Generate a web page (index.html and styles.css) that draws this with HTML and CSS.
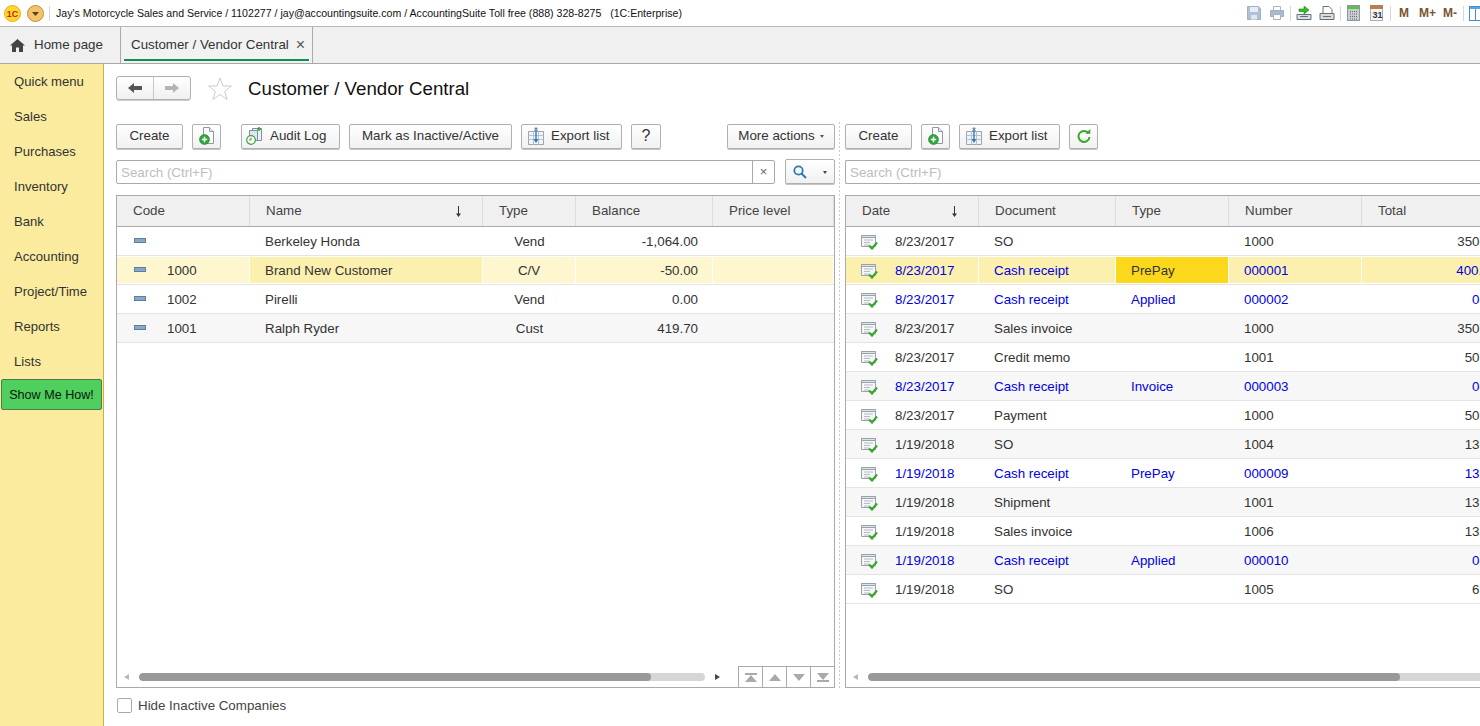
FILE: index.html
```html
<!DOCTYPE html>
<html lang="en">
<head>
<meta charset="utf-8">
<title>Customer / Vendor Central</title>
<link rel="stylesheet" href="styles.css">
</head>
<body>
<svg class="defs" width="0" height="0" aria-hidden="true">
  <symbol id="add" viewBox="0 0 16 18">
    <path d="M4.500 .5h6l4 4v12h-10z" fill="#fff" stroke="#8c98a4"/>
    <path d="M10.500 .5v4h4" fill="#e4e9ee" stroke="#8c98a4"/>
    <circle cx="5.500" cy="12.500" r="5" fill="#2ea63a" stroke="#1d8a2a" stroke-width=".6"/>
    <path d="M2.800 12.500h5.400M5.500 9.800v5.400" stroke="#fff" stroke-width="1.500"/>
  </symbol>
  <symbol id="export" viewBox="0 0 18 18">
    <path d="M1.500 4.500h15v13h-15z" fill="#f2f5f8" stroke="#9aa6b2"/>
    <path d="M6.500 4.500v13M11.500 4.500v13M1.500 8.500h15M1.500 12.500h15" stroke="#b8c2cc" fill="none"/>
    <path d="M9 .5v14" stroke="#2f78c0" stroke-width="1.400"/>
    <path d="M6.500 12l2.500 4 2.500-4z" fill="#2f78c0"/>
    <path d="M7 1l4 3M11 1L7 4" stroke="#77838f" stroke-width=".7"/>
  </symbol>
  <symbol id="doc" viewBox="0 0 17 16">
    <path d="M.5 1.500h14v11H.500z" fill="#f6f7f8" stroke="#98a2ac"/>
    <path d="M.5 1.500h14v2H.500z" fill="#dfe3e7" stroke="#98a2ac"/>
    <path d="M3 6h9M3 8.500h6M3 11h5" stroke="#b3bbc3"/>
    <path d="M8 11.500l3 3 5-6" fill="none" stroke="#3aa62e" stroke-width="2.200"/>
  </symbol>
  <symbol id="dash" viewBox="0 0 12 5">
    <rect x=".5" y=".5" width="11" height="4" fill="#86a9c6" stroke="#5d7f9c"/>
  </symbol>
  <symbol id="sortdown" viewBox="0 0 7 11">
    <path d="M3.500 0v10" stroke="#333" stroke-width="1"/>
    <path d="M1 7.500h5L3.500 11z" fill="#333"/>
  </symbol>
</svg>

<header class="topbar">
  <svg class="logo" width="17" height="17" viewBox="0 0 17 17"><circle cx="8.500" cy="8.500" r="8" fill="#fbd92e" stroke="#f0a81c"/><text x="2.800" y="11.500" class="logo-text">1C</text></svg>
  <svg class="menu-dot" width="17" height="17" viewBox="0 0 17 17"><circle cx="8.500" cy="8.500" r="8" fill="#f6c468" stroke="#bf8a3a"/><path d="M5 7h7l-3.500 4z" fill="#5b4020"/></svg>
  <span class="top-sep first"></span>
  <span class="top-title">Jay's Motorcycle Sales and Service / 1102277 / jay@accountingsuite.com / AccountingSuite Toll free (888) 328-8275 &nbsp; (1C:Enterprise)</span>
  <div class="top-tools">
    <svg width="14" height="14" viewBox="0 0 14 14"><path d="M.5.5h11l2 2v11H.500z" fill="#aec0d4" stroke="#9db0c4"/><path d="M3 1h8v5H3z" fill="#e6edf4"/><path d="M4 9h6v4.500H4z" fill="#dfe6ee"/></svg>
    <svg width="14" height="14" viewBox="0 0 14 14"><path d="M3.500.5h7v4h-7z" fill="#fff" stroke="#a8b4c0"/><path d="M.5 4.500h13v6h-13z" fill="#a9bacb" stroke="#9fb0c0"/><path d="M3.500 8.500h7v5h-7z" fill="#fff" stroke="#a8b4c0"/></svg>
    <span class="top-sep"></span>
    <svg width="16" height="15" viewBox="0 0 16 15"><path d="M1 8.500h14v5H1z" fill="#d8dde2" stroke="#667078"/><path d="M4 10.500h8" stroke="#667078"/><path d="M3 3h5V0l5 4-5 4V5.500H3z" fill="#2fc11f" stroke="#1d7d14" stroke-width=".6"/></svg>
    <svg width="16" height="15" viewBox="0 0 16 15"><path d="M4 .5h6l3 3v5H4z" fill="#fff" stroke="#667078"/><path d="M1 7.500h14v6H1z" fill="#d8dde2" stroke="#667078"/><path d="M4 10.500h8" stroke="#667078"/></svg>
    <span class="top-sep"></span>
    <svg width="13" height="16" viewBox="0 0 13 16"><rect x=".5" y=".5" width="12" height="15" fill="#c9ced3" stroke="#8f979e"/><rect x="1" y="1" width="11" height="3" fill="#5cc04e"/><path d="M3 6.500h7M3 9h7M3 11.500h7M3 14h7" stroke="#666" stroke-dasharray="1 1"/></svg>
    <svg width="13" height="16" viewBox="0 0 13 16"><rect x=".5" y=".5" width="12" height="15" fill="#f2f4f6" stroke="#a8aeb4"/><rect x="0" y="0" width="13" height="4" fill="#b97e4c"/><text x="2.500" y="13" class="cal-text">31</text></svg>
    <span class="top-sep"></span>
    <span class="mem">M</span><span class="mem">M+</span><span class="mem">M-</span>
    <span class="top-sep"></span>
    <svg class="panel-icon" width="16" height="15" viewBox="0 0 16 15"><rect x=".5" y=".5" width="15" height="14" fill="#fff" stroke="#3e8fd0"/><rect x="1" y="1" width="14" height="2" fill="#58a6e0"/><path d="M6.500 3v11" stroke="#3e8fd0"/></svg>
  </div>
</header>

<nav class="tabbar">
  <div class="tab home">
    <svg width="15" height="13" viewBox="0 0 15 13"><path d="M7.500 0L15 6.500h-2V13H9V8.500H6V13H2V6.500H0z" fill="#444"/></svg>
    <span>Home page</span>
  </div>
  <div class="tab active"><span>Customer / Vendor Central</span><span class="tab-close">&times;</span></div>
</nav>

<div class="workspace">
  <aside class="sidebar">
    <a class="side-item">Quick menu</a>
    <a class="side-item">Sales</a>
    <a class="side-item">Purchases</a>
    <a class="side-item">Inventory</a>
    <a class="side-item">Bank</a>
    <a class="side-item">Accounting</a>
    <a class="side-item">Project/Time</a>
    <a class="side-item">Reports</a>
    <a class="side-item">Lists</a>
    <button class="show-me">Show Me How!</button>
  </aside>

  <main class="content">
    <div class="title-row">
      <div class="history">
        <span class="hist-btn"><svg width="14" height="10" viewBox="0 0 14 10"><path d="M0 5l6-5v3h8v4H6v3z" fill="#555"/></svg></span>
        <span class="hist-btn"><svg width="14" height="10" viewBox="0 0 14 10"><path d="M14 5L8 0v3H0v4h8v3z" fill="#b4b4b4"/></svg></span>
      </div>
      <svg class="star" width="24" height="23" viewBox="0 0 24 23"><path d="M12 1l3 8h8.500l-7 5.500 2.700 8L12 17.500 4.800 22.500l2.700-8-7-5.500H9z" fill="#fff" stroke="#c9ced3"/></svg>
      <h1 class="page-title">Customer / Vendor Central</h1>
    </div>

    <div class="panes">
      <section class="pane left">
        <div class="toolbar">
          <button class="btn w-create">Create</button>
          <button class="btn icon-btn"><svg width="16" height="18"><use href="#add"/></svg></button>
          <button class="btn w-audit gap-l">
            <svg width="18" height="18" viewBox="0 0 18 18"><path d="M6.500 1.500h9v12h-9z" fill="#eef2f6" stroke="#7f8f9f"/><path d="M3.500 3.500h8v10h-8z" fill="#dbe6f0" stroke="#7f8f9f"/><path d="M13 0v4M11 2h4" stroke="#2ea63a" stroke-width="1.500"/><circle cx="5" cy="13" r="4.300" fill="#fff" stroke="#2ea63a" stroke-width="1.200"/><path d="M5 10.500V13h-2" stroke="#c05030" fill="none"/></svg>
            <span>Audit Log</span>
          </button>
          <button class="btn w-mark">Mark as Inactive/Active</button>
          <button class="btn w-export"><svg width="18" height="18"><use href="#export"/></svg><span>Export list</span></button>
          <button class="btn w-help">?</button>
          <button class="btn w-more">More actions <i class="caret"></i></button>
        </div>
        <div class="search-row">
          <div class="search"><span class="placeholder">Search (Ctrl+F)</span><span class="clear">&times;</span></div>
          <button class="btn search-btn">
            <svg width="14" height="14" viewBox="0 0 14 14"><circle cx="5.500" cy="5.500" r="4.200" fill="none" stroke="#2e78b4" stroke-width="1.800"/><path d="M8.500 8.500l4.500 4.500" stroke="#2e78b4" stroke-width="2"/></svg>
            <i class="caret dark"></i>
          </button>
        </div>
        <div class="grid">
          <div class="row head cols-l">
            <div class="hc">Code</div>
            <div class="hc sorted">Name<svg class="sort" width="7" height="11"><use href="#sortdown"/></svg></div>
            <div class="hc">Type</div>
            <div class="hc">Balance</div>
            <div class="hc">Price level</div>
          </div>
          <div class="rows">
            <div class="row cols-l">
              <div class="c c-code"><svg class="dash" width="12" height="5"><use href="#dash"/></svg></div><div class="c c-name">Berkeley Honda</div><div class="c c-center">Vend</div><div class="c c-bal">-1,064.00</div><div class="c"></div>
            </div>
            <div class="row cols-l sel">
              <div class="c c-code"><svg class="dash" width="12" height="5"><use href="#dash"/></svg><span>1000</span></div><div class="c c-name cur">Brand New Customer</div><div class="c c-center">C/V</div><div class="c c-bal">-50.00</div><div class="c"></div>
            </div>
            <div class="row cols-l">
              <div class="c c-code"><svg class="dash" width="12" height="5"><use href="#dash"/></svg><span>1002</span></div><div class="c c-name">Pirelli</div><div class="c c-center">Vend</div><div class="c c-bal">0.00</div><div class="c"></div>
            </div>
            <div class="row cols-l alt">
              <div class="c c-code"><svg class="dash" width="12" height="5"><use href="#dash"/></svg><span>1001</span></div><div class="c c-name">Ralph Ryder</div><div class="c c-center">Cust</div><div class="c c-bal">419.70</div><div class="c"></div>
            </div>
          </div>
          <div class="hscroll">
            <i class="arrow-l"></i>
            <div class="track l-track"><div class="thumb l-thumb"></div></div>
            <i class="arrow-r"></i>
            <div class="pager">
              <span class="pg"><svg width="12" height="9" viewBox="0 0 12 9"><path d="M0 0h12v2H0zM6 2l6 7H0z" fill="#aaa"/></svg></span>
              <span class="pg"><svg width="12" height="7" viewBox="0 0 12 7"><path d="M6 0l6 7H0z" fill="#aaa"/></svg></span>
              <span class="pg"><svg width="12" height="7" viewBox="0 0 12 7"><path d="M0 0h12L6 7z" fill="#aaa"/></svg></span>
              <span class="pg"><svg width="12" height="9" viewBox="0 0 12 9"><path d="M0 0h12L6 7zM0 7h12v2H0z" fill="#aaa"/></svg></span>
            </div>
          </div>
        </div>
      </section>

      <div class="splitter"></div>

      <section class="pane right">
        <div class="toolbar">
          <button class="btn w-create">Create</button>
          <button class="btn icon-btn"><svg width="16" height="18"><use href="#add"/></svg></button>
          <button class="btn w-export"><svg width="18" height="18"><use href="#export"/></svg><span>Export list</span></button>
          <button class="btn icon-btn"><svg width="14" height="14" viewBox="0 0 14 14"><path d="M11.500 4.200A5.500 5.500 0 1 0 12.500 8" fill="none" stroke="#3aa62e" stroke-width="2"/><path d="M8.500 4.800h4.800V0z" fill="#3aa62e"/></svg></button>
        </div>
        <div class="search-row">
          <div class="search wide"><span class="placeholder">Search (Ctrl+F)</span></div>
        </div>
        <div class="grid wide-grid">
          <div class="row head cols-r">
            <div class="hc sorted">Date<svg class="sort" width="7" height="11"><use href="#sortdown"/></svg></div>
            <div class="hc">Document</div>
            <div class="hc">Type</div>
            <div class="hc">Number</div>
            <div class="hc">Total</div>
          </div>
          <div class="rows">
            <div class="row cols-r"><div class="c c-date"><svg class="doc" width="17" height="16"><use href="#doc"/></svg><span>8/23/2017</span></div><div class="c">SO</div><div class="c"></div><div class="c">1000</div><div class="c c-total">350.00</div></div>
            <div class="row cols-r sel link"><div class="c c-date"><svg class="doc" width="17" height="16"><use href="#doc"/></svg><span>8/23/2017</span></div><div class="c">Cash receipt</div><div class="c c-hot">PrePay</div><div class="c">000001</div><div class="c c-total">400.00</div></div>
            <div class="row cols-r link"><div class="c c-date"><svg class="doc" width="17" height="16"><use href="#doc"/></svg><span>8/23/2017</span></div><div class="c">Cash receipt</div><div class="c">Applied</div><div class="c">000002</div><div class="c c-total">0.00</div></div>
            <div class="row cols-r alt"><div class="c c-date"><svg class="doc" width="17" height="16"><use href="#doc"/></svg><span>8/23/2017</span></div><div class="c">Sales invoice</div><div class="c"></div><div class="c">1000</div><div class="c c-total">350.00</div></div>
            <div class="row cols-r"><div class="c c-date"><svg class="doc" width="17" height="16"><use href="#doc"/></svg><span>8/23/2017</span></div><div class="c">Credit memo</div><div class="c"></div><div class="c">1001</div><div class="c c-total">50.00</div></div>
            <div class="row cols-r alt link"><div class="c c-date"><svg class="doc" width="17" height="16"><use href="#doc"/></svg><span>8/23/2017</span></div><div class="c">Cash receipt</div><div class="c">Invoice</div><div class="c">000003</div><div class="c c-total">0.00</div></div>
            <div class="row cols-r"><div class="c c-date"><svg class="doc" width="17" height="16"><use href="#doc"/></svg><span>8/23/2017</span></div><div class="c">Payment</div><div class="c"></div><div class="c">1000</div><div class="c c-total">50.00</div></div>
            <div class="row cols-r alt"><div class="c c-date"><svg class="doc" width="17" height="16"><use href="#doc"/></svg><span>1/19/2018</span></div><div class="c">SO</div><div class="c"></div><div class="c">1004</div><div class="c c-total">13.00</div></div>
            <div class="row cols-r link"><div class="c c-date"><svg class="doc" width="17" height="16"><use href="#doc"/></svg><span>1/19/2018</span></div><div class="c">Cash receipt</div><div class="c">PrePay</div><div class="c">000009</div><div class="c c-total">13.00</div></div>
            <div class="row cols-r alt"><div class="c c-date"><svg class="doc" width="17" height="16"><use href="#doc"/></svg><span>1/19/2018</span></div><div class="c">Shipment</div><div class="c"></div><div class="c">1001</div><div class="c c-total">13.00</div></div>
            <div class="row cols-r"><div class="c c-date"><svg class="doc" width="17" height="16"><use href="#doc"/></svg><span>1/19/2018</span></div><div class="c">Sales invoice</div><div class="c"></div><div class="c">1006</div><div class="c c-total">13.00</div></div>
            <div class="row cols-r alt link"><div class="c c-date"><svg class="doc" width="17" height="16"><use href="#doc"/></svg><span>1/19/2018</span></div><div class="c">Cash receipt</div><div class="c">Applied</div><div class="c">000010</div><div class="c c-total">0.00</div></div>
            <div class="row cols-r"><div class="c c-date"><svg class="doc" width="17" height="16"><use href="#doc"/></svg><span>1/19/2018</span></div><div class="c">SO</div><div class="c"></div><div class="c">1005</div><div class="c c-total">6.00</div></div>
          </div>
          <div class="hscroll">
            <i class="arrow-l"></i>
            <div class="track r-track"><div class="thumb r-thumb"></div></div>
          </div>
        </div>
      </section>
    </div>

    <label class="footer"><span class="check"></span><span class="footer-text">Hide Inactive Companies</span></label>
  </main>
</div>
</body>
</html>
```
FILE: styles.css
```css
* { box-sizing: border-box; }
html, body { margin: 0; height: 100%; overflow: hidden; }
body {
  width: 1480px; height: 726px; display: flex; flex-direction: column;
  font: 13.33px/16px "Liberation Sans", Arial, sans-serif; color: #333; background: #fff;
}
.defs { position: absolute; }
button { font: inherit; color: inherit; }

.topbar { height: 27px; flex: none; display: flex; align-items: center; padding-left: 4px; border-bottom: 1px solid #b8b8b8; overflow: hidden; }
.logo-text { font: bold 9px "Liberation Sans", sans-serif; fill: #d81a10; }
.cal-text { font: bold 9px "Liberation Sans", sans-serif; fill: #334; }
.menu-dot { margin-left: 6px; }
.top-sep { width: 1px; height: 15px; background: #d8d8d8; flex: none; }
.top-sep.first { margin: 0 6px 0 5px; }
.top-title { font-size: 10.6px; color: #111; white-space: nowrap; }
.top-tools { margin-left: auto; display: flex; align-items: center; width: 233px; flex: none; overflow: hidden; }
.top-tools > * { flex: none; }
.top-tools > :nth-child(2) { margin-left: 9px; }
.top-tools > :nth-child(3) { margin-left: 6px; }
.top-tools > :nth-child(4) { margin-left: 5px; }
.top-tools > :nth-child(5) { margin-left: 7px; }
.top-tools > :nth-child(6) { margin-left: 5px; }
.top-tools > :nth-child(7) { margin-left: 6px; }
.top-tools > :nth-child(8) { margin-left: 10px; }
.top-tools > :nth-child(9) { margin-left: 7px; }
.top-tools > :nth-child(10) { margin-left: 8px; }
.top-tools > :nth-child(11) { margin-left: 10px; }
.top-tools > :nth-child(12) { margin-left: 7px; }
.top-tools > :nth-child(13) { margin-left: 6px; }
.top-tools > :nth-child(14) { margin-left: 5px; }
.mem { font: bold 12px "Liberation Sans", sans-serif; color: #7a5230; }

.tabbar { height: 37px; flex: none; display: flex; background: #f0f0f0; border-bottom: 1px solid #a8a8a8; }
.tab { display: flex; align-items: center; white-space: nowrap; }
.home { width: 121px; padding-left: 10px; gap: 9px; border-right: 1px solid #aaa; }
.active { width: 192px; padding-left: 10px; border-right: 1px solid #aaa; background: #f2f2f2; position: relative; }
.active::after { content: ""; position: absolute; left: 3px; right: 3px; bottom: 2px; height: 2px; background: #0f8f4f; }
.tab-close { margin-left: 7px; font-size: 16px; color: #555; }

.workspace { flex: 1; min-height: 0; display: flex; }
.sidebar { width: 104px; flex: none; background: #fbeb9f; border-right: 1px solid #c9b23e; display: flex; flex-direction: column; }
.side-item { height: 35px; flex: none; padding-left: 14px; line-height: 35px; font-size: 13.1px; }
.show-me { margin: 0 0 0 1px; width: 101px; height: 31px; padding: 0; background: #4ecf5e; border: 1px solid #4d7a50; border-radius: 2px; color: #0c1a0c; font-size: 12.6px; }

.content { flex: 1; min-width: 0; padding: 12px 0 0 12px; display: flex; flex-direction: column; }
.title-row { height: 24px; flex: none; display: flex; align-items: center; }
.history { display: flex; width: 75px; height: 24px; border: 1px solid #b0b0b0; border-radius: 3px; background: linear-gradient(#fff, #f0f0f0); box-shadow: 0 1px 0 #ccc; }
.hist-btn { flex: 1; display: flex; align-items: center; justify-content: center; }
.hist-btn + .hist-btn { border-left: 1px solid #c8c8c8; }
.star { margin-left: 17px; }
.page-title { margin: 0 0 0 16px; padding-top: 2px; font-size: 18.7px; line-height: 24px; font-weight: normal; color: #111; }

.panes { flex: 1; min-height: 0; display: flex; padding-top: 22px; }
.pane { display: flex; flex-direction: column; flex: none; }
.pane.left { width: 719px; }
.pane.right { width: 700px; }
.splitter { width: 10px; flex: none; background: linear-gradient(#ccc 50%, transparent 50%) 4px 0 / 1px 4px repeat-y; }

.toolbar { height: 25px; flex: none; display: flex; gap: 9px; margin-top: 2px; }
.btn { height: 25px; display: inline-flex; align-items: center; justify-content: center; gap: 6px; padding: 0 0 2px; border: 1px solid #b0b0b0; border-radius: 2px; background: linear-gradient(#fff, #f1f1f1); box-shadow: 0 1px 0 #c4c4c4; white-space: nowrap; }
.w-create { width: 67px; }
.icon-btn { width: 29px; }
.gap-l { margin-left: 11px; }
.w-audit { width: 99px; justify-content: flex-start; padding-left: 4px; }
.w-mark { width: 163px; }
.w-export { width: 101px; justify-content: flex-start; padding-left: 5px; }
.w-help { width: 30px; font-size: 16px; }
.w-more { width: 108px; margin-left: auto; gap: 5px; }
.caret { display: inline-block; width: 0; height: 0; border: 2.500px solid transparent; border-top: 3px solid #555; border-bottom: 0; position: relative; top: 1px; }
.caret.dark { border-top-color: #444; }

.search-row { height: 26px; flex: none; margin-top: 9px; display: flex; gap: 10px; align-items: flex-end; }
.search { flex: 1; height: 24px; display: flex; align-items: center; border: 1px solid #aaa; border-radius: 2px; background: #fff; }
.placeholder { flex: 1; padding: 2px 0 0 4px; color: #bdbdbd; }
.clear { width: 22px; height: 22px; border-left: 1px solid #aaa; display: flex; align-items: center; justify-content: center; font-size: 13px; color: #666; }
.search-btn { width: 50px; height: 25px; gap: 16px; padding: 0 0 0 7px; justify-content: flex-start; }
.search.wide { border-right: 0; }

.grid { flex: 1; min-height: 0; margin-top: 11px; display: flex; flex-direction: column; border: 1px solid #aaa; background: #fff; }
.grid.wide-grid { border-right: 0; }
.row { display: grid; height: 29px; align-items: stretch; border-bottom: 1px solid #e4e4e4; }
.cols-l { grid-template-columns: 133px 233px 93px 137px 121px; }
.cols-r { grid-template-columns: 133px 137px 113px 133px 138px; }
.head { height: 31px; background: #f0f0f0; border-bottom: 1px solid #ababab; color: #444; }
.hc { padding: 0 0 0 16px; display: flex; align-items: center; justify-content: space-between; border-right: 1px solid #dcdcdc; white-space: nowrap; }
.sort { margin-right: 20px; }
.rows { flex: 1; min-height: 0; }
.c { padding: 2px 0 0 15px; display: flex; align-items: center; white-space: nowrap; }
.alt { background: #f7f7f7; }
.sel { background: #fff; }
.sel .c { background-color: #fdf6cf; background-clip: padding-box; border: 1px solid #fff; border-left: 0; }
.sel .c.cur, .sel.link .c { background-color: #fcf0ae; }
.sel.link .c.c-hot { background-color: #fbd81c; }
.link { color: #0000e6; }
.c-code { padding-left: 17px; }
.c-code span { margin-left: 21px; }
.dash { flex: none; position: relative; top: -2px; }
.c-center { justify-content: center; padding: 2px 0 0; }
.c-bal { padding: 2px 15px 0 0; justify-content: flex-end; }
.sel .c-bal { padding-right: 14px; }
.c-date { gap: 17px; }
.doc { flex: none; }
.c-hot { color: #333; }
.c-total { justify-content: flex-end; padding: 2px 0 0; width: 136px; }

.hscroll { height: 22px; flex: none; display: flex; align-items: center; padding-top: 2px; }
.arrow-l { width: 0; height: 0; margin-left: 7px; border: 3.500px solid transparent; border-right: 5px solid #b8b8b8; border-left: 0; }
.arrow-r { width: 0; height: 0; margin-left: 10px; border: 3.500px solid transparent; border-left: 5px solid #444; border-right: 0; }
.track { height: 8px; margin-left: 10px; border-radius: 4px; background: #d6d6d6; overflow: hidden; }
.thumb { height: 8px; border-radius: 4px; background: #999; }
.l-track { width: 566px; }
.l-thumb { width: 512px; }
.r-track { width: 640px; }
.r-thumb { width: 532px; }
.pager { margin-left: auto; display: flex; height: 21px; align-self: flex-end; border-top: 1px solid #aaa; border-left: 1px solid #aaa; }
.pg { width: 24px; display: flex; align-items: center; justify-content: center; border-right: 1px solid #aaa; }
.pg:last-child { width: 23px; border-right: 0; }

.footer { height: 38px; flex: none; display: flex; align-items: center; gap: 6px; padding: 0 0 4px 1px; color: #444; }
.footer-text { padding-top: 2px; }
.check { width: 15px; height: 15px; border: 1px solid #aaa; border-radius: 2px; background: #fff; }
```
